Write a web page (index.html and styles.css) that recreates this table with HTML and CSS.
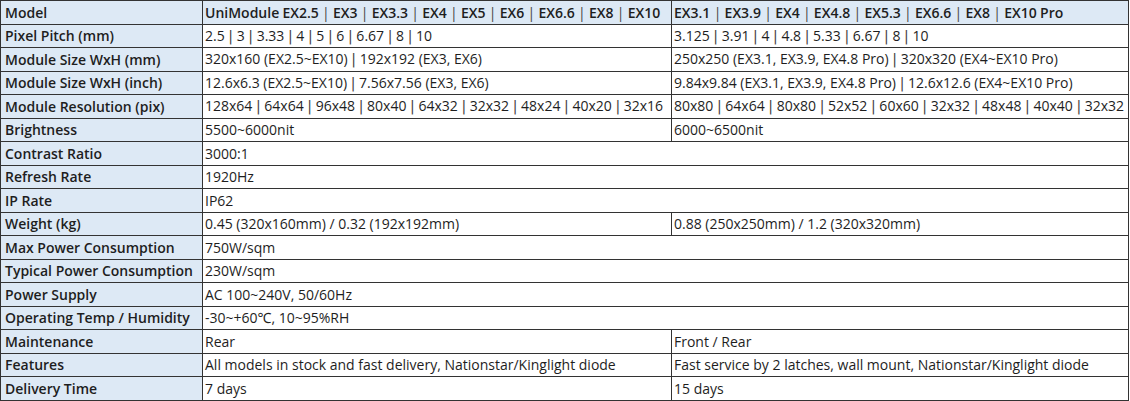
FILE: index.html
```html
<!DOCTYPE html>
<html>
<head>
<meta charset="utf-8">
<link rel="stylesheet" href="styles.css">
</head>
<body>
<table class="spec">
  <colgroup><col class="c-label"><col class="c-a"><col class="c-b"></colgroup>
  <tr class="head"><th>Model</th><th class="hd">UniModule EX2.5 <span class="hsep">|</span> EX3 <span class="hsep">|</span> EX3.3 <span class="hsep">|</span> EX4 <span class="hsep">|</span> EX5 <span class="hsep">|</span> EX6 <span class="hsep">|</span> EX6.6 <span class="hsep">|</span> EX8 <span class="hsep">|</span> EX10</th><th class="hd">EX3.1 <span class="hsep">|</span> EX3.9 <span class="hsep">|</span> EX4 <span class="hsep">|</span> EX4.8 <span class="hsep">|</span> EX5.3 <span class="hsep">|</span> EX6.6 <span class="hsep">|</span> EX8 <span class="hsep">|</span> EX10 Pro</th></tr>
  <tr><th>Pixel Pitch (mm)</th><td>2.5 <span class="sep">|</span> 3 <span class="sep">|</span> 3.33 <span class="sep">|</span> 4 <span class="sep">|</span> 5 <span class="sep">|</span> 6 <span class="sep">|</span> 6.67 <span class="sep">|</span> 8 <span class="sep">|</span> 10</td><td>3.125 <span class="sep">|</span> 3.91 <span class="sep">|</span> 4 <span class="sep">|</span> 4.8 <span class="sep">|</span> 5.33 <span class="sep">|</span> 6.67 <span class="sep">|</span> 8 <span class="sep">|</span> 10</td></tr>
  <tr><th>Module Size WxH (mm)</th><td>320x160 (EX2.5~EX10) <span class="sep">|</span> 192x192 (EX3, EX6)</td><td>250x250 (EX3.1, EX3.9, EX4.8 Pro) <span class="sep">|</span> 320x320 (EX4~EX10 Pro)</td></tr>
  <tr><th>Module Size WxH (inch)</th><td>12.6x6.3 (EX2.5~EX10) <span class="sep">|</span> 7.56x7.56 (EX3, EX6)</td><td>9.84x9.84 (EX3.1, EX3.9, EX4.8 Pro) <span class="sep">|</span> 12.6x12.6 (EX4~EX10 Pro)</td></tr>
  <tr><th>Module Resolution (pix)</th><td>128x64 <span class="sep">|</span> 64x64 <span class="sep">|</span> 96x48 <span class="sep">|</span> 80x40 <span class="sep">|</span> 64x32 <span class="sep">|</span> 32x32 <span class="sep">|</span> 48x24 <span class="sep">|</span> 40x20 <span class="sep">|</span> 32x16</td><td>80x80 <span class="sep">|</span> 64x64 <span class="sep">|</span> 80x80 <span class="sep">|</span> 52x52 <span class="sep">|</span> 60x60 <span class="sep">|</span> 32x32 <span class="sep">|</span> 48x48 <span class="sep">|</span> 40x40 <span class="sep">|</span> 32x32</td></tr>
  <tr><th>Brightness</th><td>5500~6000nit</td><td>6000~6500nit</td></tr>
  <tr><th>Contrast Ratio</th><td colspan="2">3000:1</td></tr>
  <tr><th>Refresh Rate</th><td colspan="2">1920Hz</td></tr>
  <tr><th>IP Rate</th><td colspan="2">IP62</td></tr>
  <tr><th>Weight (kg)</th><td>0.45 (320x160mm) / 0.32 (192x192mm)</td><td>0.88 (250x250mm) / 1.2 (320x320mm)</td></tr>
  <tr><th>Max Power Consumption</th><td colspan="2">750W/sqm</td></tr>
  <tr><th>Typical Power Consumption</th><td colspan="2">230W/sqm</td></tr>
  <tr><th>Power Supply</th><td colspan="2">AC 100~240V, 50/60Hz</td></tr>
  <tr><th>Operating Temp / Humidity</th><td colspan="2">-30~+60℃, 10~95%RH</td></tr>
  <tr><th>Maintenance</th><td>Rear</td><td>Front / Rear</td></tr>
  <tr><th>Features</th><td>All models in stock and fast delivery, Nationstar/Kinglight diode</td><td>Fast service by 2 latches, wall mount, Nationstar/Kinglight diode</td></tr>
  <tr><th>Delivery Time</th><td>7 days</td><td>15 days</td></tr>
</table>
</body>
</html>
```
FILE: styles.css
```css
html, body {
  margin: 0;
  padding: 0;
  background: #ffffff;
}
.spec {
  border-collapse: collapse;
  width: 1129px;
  table-layout: fixed;
  font-family: "Open Sans", "Noto Sans", sans-serif;
  font-size: 14px;
  color: #1e1e1e;
}
.c-label { width: 202px; }
.c-a { width: 469px; }
.spec th, .spec td {
  border: 1px solid #333333;
  height: 22.5px;
  padding: 0 0 0 2px;
  text-align: left;
  white-space: nowrap;
  overflow: hidden;
  line-height: 17px;
}
.spec th {
  font-weight: 600;
  background: #dde9f5;
  padding-left: 4px;
}
.spec th.hd {
  padding-left: 2px;
  word-spacing: -0.4px;
}
.spec td {
  font-weight: 400;
}
.hsep {
  font-weight: 400;
  color: #444444;
}
.sep {
  font-family: "DejaVu Sans", sans-serif;
  font-weight: 400;
  color: #444444;
}
```
